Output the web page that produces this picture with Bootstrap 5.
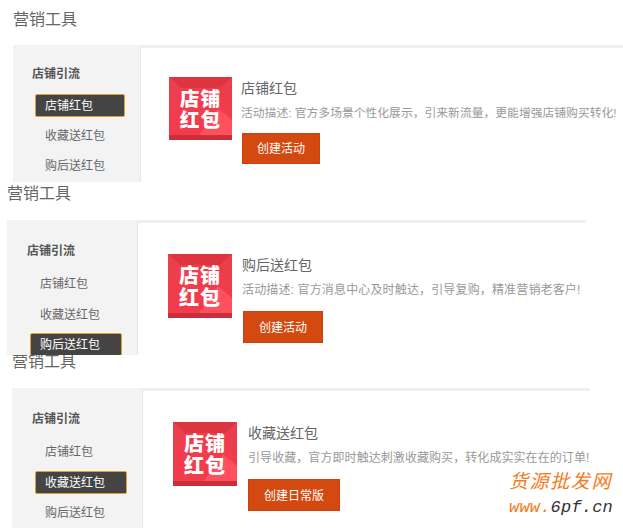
<!DOCTYPE html>
<html lang="zh-CN">
<head>
<meta charset="utf-8">
<title>营销工具</title>
<link href="https://cdn.jsdelivr.net/npm/bootstrap@5.3.0/dist/css/bootstrap.min.css" rel="stylesheet">
<style>
html,body{margin:0;height:528px;overflow:hidden;background:#fff}
body{font-family:"Liberation Sans","Noto Sans CJK SC",sans-serif;color:#666;font-size:12px;position:relative}
.shot{height:173px;overflow:hidden;position:relative}
.shot-a{height:182px;padding:8px 0 0 13px}
.shot-b{padding:0 0 0 7px}
.shot-c{padding:0 0 0 12px}
.page-title{font-size:16px;line-height:24px;font-weight:400;color:#666;margin:0 0 14px}
.shot-a .page-title{margin-bottom:13px}
.shot-c .page-title{margin-top:-5px}
.panel{height:200px}
.shot-a .panel{width:640px}
.shot-b .panel{width:579px}
.shot-c .panel{width:578px}
.side{background:#f3f3f3;width:130px;flex:none;padding:20px 0 0 20px}
.shot-a .side{width:127px;padding:18px 0 0 19px}
.side-head{font-size:12px;line-height:22px;font-weight:700;color:#555;margin-bottom:10px}
.shot-a .side-head{margin-bottom:9px}
.side-list{gap:7.5px;width:92px;margin-left:3px}
.shot-a .side-list{gap:7px;width:90px}
.side-item{height:23px;line-height:23px;padding-left:9px;border:1px solid transparent;border-radius:2px;color:#666;text-decoration:none;font-size:12px;white-space:nowrap}
.side-item.on{background:#444;border-color:#e0a030;color:#fff}
.main-area{background:#fff;border-top:3px solid #efefef;border-left:1px solid #e6e6e6;padding:29px 0 0 28px;gap:9px}
.shot-b .main-area,.shot-c .main-area{padding:31px 0 0 30px}
.shot-b .main-area{gap:10px}
.shot-c .main-area{gap:11px}
.promo{width:64px;height:64px;flex:none;display:block}
.shot-a .promo{width:63px;height:63px}
.promo text{font-family:"Noto Sans CJK SC",sans-serif;font-weight:900;font-size:20px;letter-spacing:1px;fill:#fff}
.tool-name{font-size:14px;line-height:22px;font-weight:400;color:#666;margin:0 0 4px}
.tool-desc{font-size:11.8px;line-height:20px;color:#999;margin:0 0 11px;white-space:nowrap}
.shot-b .tool-desc{font-size:12px;letter-spacing:.15px}
.shot-c .tool-desc{font-size:12px;letter-spacing:.07px}
.shot-a .tool-desc{margin-bottom:10px}
.make-btn{display:block;height:32px;width:80px;line-height:32px;padding:0;background:#d4490f;border:1px solid #c8430d;border-radius:0;color:#fff;font-size:12px}
.shot-a .make-btn{width:78px;height:31px;line-height:31px;margin-left:1px}
.shot-b .make-btn{margin-left:1px}
.shot-c .make-btn{width:92px}
.make-btn:hover{background:#d4490f;color:#fff;border-color:#c8430d}
.stamp{position:absolute;left:509px;top:470px;width:110px;font-style:italic}
.stamp-cn{font-size:19px;line-height:24px;color:#f47a20;letter-spacing:1.6px;white-space:nowrap}
.stamp-url{font-size:17px;line-height:24px;color:#333;letter-spacing:.2px;white-space:nowrap;font-family:"Liberation Mono",monospace;margin-top:2px}
.stamp-url span{color:#f47a20}
</style>
</head>
<body>

<section class="shot shot-a">
  <h2 class="page-title">营销工具</h2>
  <div class="panel d-flex">
    <div class="side">
      <div class="side-head">店铺引流</div>
      <div class="side-list d-flex flex-column">
        <a class="side-item on" href="#">店铺红包</a>
        <a class="side-item" href="#">收藏送红包</a>
        <a class="side-item" href="#">购后送红包</a>
      </div>
    </div>
    <div class="main-area flex-grow-1 d-flex align-items-start">
      <svg class="promo" viewBox="0 0 64 64"><rect width="64" height="64" fill="#f03c4c"/><polygon points="0,0 64,0 52,11 12,11" fill="#dd3440"/><polygon points="0,0 12,11 0,30" fill="#e8404c"/><polygon points="64,0 64,40 52,11" fill="#ea3d4d"/><polygon points="30,60 50,32 64,44 64,60" fill="#ff5060"/><rect y="59" width="64" height="5" fill="#c92f38"/><text x="32" y="29" text-anchor="middle">店铺</text><text x="32" y="51" text-anchor="middle">红包</text></svg>
      <div>
        <h3 class="tool-name">店铺红包</h3>
        <p class="tool-desc">活动描述: 官方多场景个性化展示，引来新流量，更能增强店铺购买转化!</p>
        <a class="btn make-btn" href="#">创建活动</a>
      </div>
    </div>
  </div>
</section>

<section class="shot shot-b">
  <h2 class="page-title">营销工具</h2>
  <div class="panel d-flex">
    <div class="side">
      <div class="side-head">店铺引流</div>
      <div class="side-list d-flex flex-column">
        <a class="side-item" href="#">店铺红包</a>
        <a class="side-item" href="#">收藏送红包</a>
        <a class="side-item on" href="#">购后送红包</a>
      </div>
    </div>
    <div class="main-area flex-grow-1 d-flex align-items-start">
      <svg class="promo" viewBox="0 0 64 64"><rect width="64" height="64" fill="#f03c4c"/><polygon points="0,0 64,0 52,11 12,11" fill="#dd3440"/><polygon points="0,0 12,11 0,30" fill="#e8404c"/><polygon points="64,0 64,40 52,11" fill="#ea3d4d"/><polygon points="30,60 50,32 64,44 64,60" fill="#ff5060"/><rect y="59" width="64" height="5" fill="#c92f38"/><text x="32" y="29" text-anchor="middle">店铺</text><text x="32" y="51" text-anchor="middle">红包</text></svg>
      <div>
        <h3 class="tool-name">购后送红包</h3>
        <p class="tool-desc">活动描述: 官方消息中心及时触达，引导复购，精准营销老客户!</p>
        <a class="btn make-btn" href="#">创建活动</a>
      </div>
    </div>
  </div>
</section>

<section class="shot shot-c">
  <h2 class="page-title">营销工具</h2>
  <div class="panel d-flex">
    <div class="side">
      <div class="side-head">店铺引流</div>
      <div class="side-list d-flex flex-column">
        <a class="side-item" href="#">店铺红包</a>
        <a class="side-item on" href="#">收藏送红包</a>
        <a class="side-item" href="#">购后送红包</a>
      </div>
    </div>
    <div class="main-area flex-grow-1 d-flex align-items-start">
      <svg class="promo" viewBox="0 0 64 64"><rect width="64" height="64" fill="#f03c4c"/><polygon points="0,0 64,0 52,11 12,11" fill="#dd3440"/><polygon points="0,0 12,11 0,30" fill="#e8404c"/><polygon points="64,0 64,40 52,11" fill="#ea3d4d"/><polygon points="30,60 50,32 64,44 64,60" fill="#ff5060"/><rect y="59" width="64" height="5" fill="#c92f38"/><text x="32" y="29" text-anchor="middle">店铺</text><text x="32" y="51" text-anchor="middle">红包</text></svg>
      <div>
        <h3 class="tool-name">收藏送红包</h3>
        <p class="tool-desc">引导收藏，官方即时触达刺激收藏购买，转化成实实在在的订单!</p>
        <a class="btn make-btn" href="#">创建日常版</a>
      </div>
    </div>
  </div>
</section>

<div class="stamp">
  <div class="stamp-cn">货源批发网</div>
  <div class="stamp-url"><span>www.</span>6pf.cn</div>
</div>

<script src="https://cdn.jsdelivr.net/npm/bootstrap@5.3.0/dist/js/bootstrap.bundle.min.js"></script>
</body>
</html>
